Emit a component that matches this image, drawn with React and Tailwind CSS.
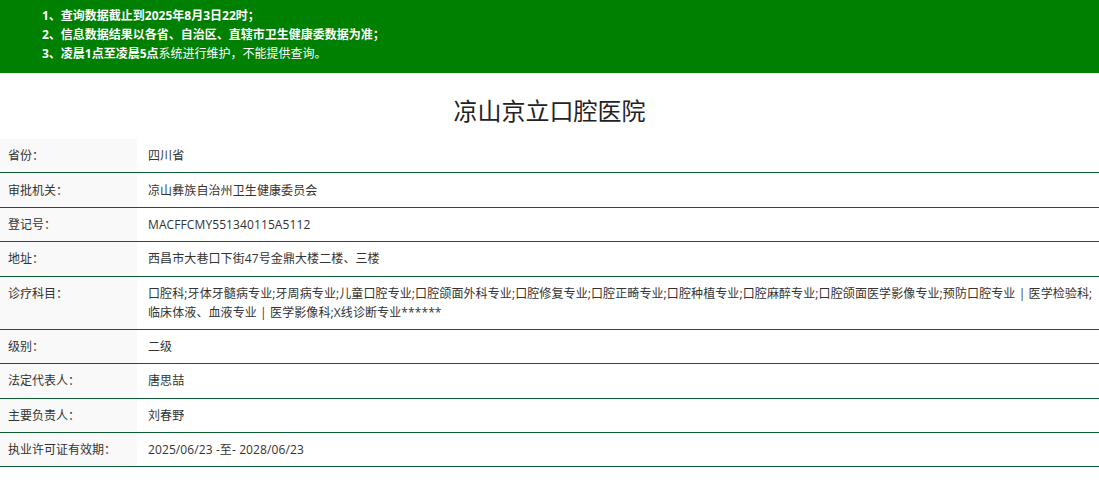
import React from "react";

const rows = [
  { label: "省份：", value: "四川省" },
  { label: "审批机关：", value: "凉山彝族自治州卫生健康委员会" },
  { label: "登记号：", value: "MACFFCMY551340115A5112" },
  { label: "地址：", value: "西昌市大巷口下街47号金鼎大楼二楼、三楼" },
  {
    label: "诊疗科目：",
    value:
      "口腔科;牙体牙髓病专业;牙周病专业;儿童口腔专业;口腔颌面外科专业;口腔修复专业;口腔正畸专业;口腔种植专业;口腔麻醉专业;口腔颌面医学影像专业;预防口腔专业 | 医学检验科;临床体液、血液专业 | 医学影像科;X线诊断专业******",
  },
  { label: "级别：", value: "二级" },
  { label: "法定代表人：", value: "唐思喆" },
  { label: "主要负责人：", value: "刘春野" },
  { label: "执业许可证有效期：", value: "2025/06/23 -至- 2028/06/23" },
];

const App = () => {
  return (
    <div
      className="w-full min-h-screen bg-white text-[#333]"
      style={{ fontFamily: '"Open Sans", "Noto Sans CJK SC", sans-serif' }}
    >
      {/* Notice banner */}
      <div className="bg-[#008000] h-[73px] pl-[42px] pt-[6px] text-white text-[12px] leading-[19px]">
        <p className="font-bold">1、查询数据截止到2025年8月3日22时；</p>
        <p className="font-bold">2、信息数据结果以各省、自治区、直辖市卫生健康委数据为准；</p>
        <p>
          <span className="font-bold">3、凌晨1点至凌晨5点</span>系统进行维护，不能提供查询。
        </p>
      </div>

      {/* Title */}
      <h1 className="text-center text-[24px] leading-[36px] text-[#222] pt-[20px] pb-[10px]">
        凉山京立口腔医院
      </h1>

      {/* Detail table */}
      <div className="text-[12px] leading-[19px]">
        {rows.map((row) => (
          <div key={row.label} className="flex border-b border-[#0d5c32]">
            <div className="w-[137px] shrink-0 bg-[#f9f9f9] pl-[8px] py-[7.2px] text-[#333]">
              {row.label}
            </div>
            <div className="flex-1 pl-[11px] pr-[4px] py-[7.2px] text-[#333] tracking-[0.1px]">
              {row.value}
            </div>
          </div>
        ))}
      </div>
    </div>
  );
};

export default App;
